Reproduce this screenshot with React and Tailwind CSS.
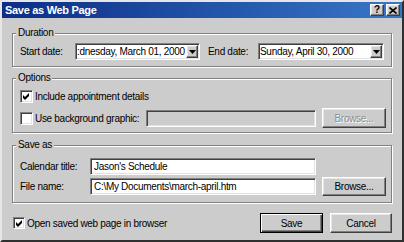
import React from "react";

const sunken =
	"border-t border-l border-r border-b border-t-[#808080] border-l-[#808080] border-r-white border-b-white shadow-[inset_1px_1px_0_#404040,inset_-1px_-1px_0_#e2e2e2]";
const raised =
	"border-t border-l border-r border-b border-t-white border-l-white border-r-[#404040] border-b-[#404040] shadow-[inset_-1px_-1px_0_#808080,inset_1px_1px_0_#e6e6e6]";

function Check() {
	return (
		<svg width="7" height="7" viewBox="0 0 7 7">
			<path d="M0 2 L2 4 L6 0 L6 3 L2 7 L0 5 Z" fill="#000" />
		</svg>
	);
}

function Checkbox({ checked, size = "w-[13px] h-[13px]" }) {
	return (
		<div className={`${sunken} ${size} bg-white flex items-center justify-center shrink-0`}>
			{checked && <Check />}
		</div>
	);
}

function Combo({ value, width }) {
	return (
		<div className={`${sunken} ${width} h-[17px] bg-white flex items-center pl-[1px] pr-[1px]`}>
			<span className="flex-1 whitespace-nowrap overflow-hidden">{value}</span>
			<div className={`${raised} bg-[#cccccc] w-[12px] h-[13px] flex items-center justify-center`}>
				<svg width="7" height="4" viewBox="0 0 7 4">
					<path d="M0 0 H7 L3.5 4 Z" fill="#000" />
				</svg>
			</div>
		</div>
	);
}

function Field({ value, width, disabled }) {
	return (
		<div
			className={`${sunken} ${width} h-[17px] ${disabled ? "bg-[#cccccc]" : "bg-white"} flex items-center pl-[3px] whitespace-nowrap overflow-hidden`}
		>
			{value}
		</div>
	);
}

function Button({ children, width, height = "h-[20px]", disabled, isDefault }) {
	const frame = isDefault
		? "border border-black shadow-[inset_1px_1px_0_#fff,inset_-1px_-1px_0_#404040,inset_-2px_-2px_0_#808080]"
		: raised;
	return (
		<div
			className={`${frame} ${width} ${height} bg-[#cccccc] flex items-center justify-center ${
				disabled ? "text-[#8c8c8c] [text-shadow:1px_1px_0_#fff]" : ""
			}`}
		>
			{children}
		</div>
	);
}

function Group({ label, children, className }) {
	return (
		<fieldset
			className={`min-w-0 border border-[#808080] shadow-[inset_1px_1px_0_#fff,1px_1px_0_#fff] ${className}`}
		>
			<legend className="ml-[3px] px-[2px] bg-[#cccccc] leading-[12px]">{label}</legend>
			{children}
		</fieldset>
	);
}

export default function App() {
	return (
		<div className="w-[404px] h-[242px] bg-[#cccccc] text-black text-[10px] tracking-[-0.3px] font-['Liberation_Sans',Arial,sans-serif] border-2 border-t-[#e6e6e6] border-l-[#e6e6e6] border-r-[#303030] border-b-[#303030] flex flex-col overflow-hidden">
			<div className="h-[16px] bg-gradient-to-r from-[#0c2e86] to-[#3a76c6] flex items-center pl-[3px] pr-[2px]">
				<span className="flex-1 text-white font-bold text-[11px] leading-none">Save as Web Page</span>
				<div className="flex gap-[2px]">
					<div className={`${raised} bg-[#cccccc] w-[14px] h-[12px] flex items-center justify-center font-bold text-[10px] leading-none tracking-normal`}>
						?
					</div>
					<div className={`${raised} bg-[#cccccc] w-[14px] h-[12px] flex items-center justify-center`}>
						<svg width="8" height="7" viewBox="0 0 8 7">
							<path d="M0.5 0.5 L7.5 6.5 M7.5 0.5 L0.5 6.5" stroke="#000" strokeWidth="1.6" />
						</svg>
					</div>
				</div>
			</div>

			<div className="px-[10px] flex flex-col">
				<Group label="Duration" className="mt-[9px]">
					<div className="pl-[7px] pt-[4px] pb-[6px] flex items-center">
						<span className="w-[55px]">Start date:</span>
						<Combo value=":dnesday, March 01, 2000" width="w-[125px]" />
						<span className="ml-[8px] w-[50px]">End date:</span>
						<Combo value="Sunday, April 30, 2000" width="w-[126px]" />
					</div>
				</Group>

				<Group label="Options" className="mt-[5px]">
					<div className="pl-[7px] pr-[5px] pt-[6px] pb-[4px] flex flex-col">
						<div className="flex items-center gap-[2px] h-[13px]">
							<Checkbox checked />
							<span>Include appointment details</span>
						</div>
						<div className="mt-[5px] h-[20px] flex items-center">
							<div className="w-[126px] flex items-center gap-[2px]">
								<Checkbox />
								<span>Use background graphic:</span>
							</div>
							<Field width="w-[170px]" disabled />
							<div className="ml-[6px]">
								<Button width="w-[64px]" disabled>
									Browse...
								</Button>
							</div>
						</div>
					</div>
				</Group>

				<Group label="Save as" className="mt-[6px]">
					<div className="pl-[7px] pr-[5px] pt-[7px] pb-[6px] flex flex-col">
						<div className="flex items-center h-[16px]">
							<span className="w-[70px]">Calendar title:</span>
							<Field value="Jason's Schedule" width="w-[226px]" />
						</div>
						<div className="mt-[3px] h-[19px] flex items-center">
							<span className="w-[70px]">File name:</span>
							<Field value={"C:\\My Documents\\march-april.htm"} width="w-[226px]" />
							<div className="ml-[6px]">
								<Button width="w-[64px]" height="h-[19px]">
									Browse...
								</Button>
							</div>
						</div>
					</div>
				</Group>

				<div className="mt-[10px] h-[20px] flex items-center">
					<div className="ml-[1px] flex items-center gap-[2px] flex-1">
						<Checkbox checked size="w-[12px] h-[12px]" />
						<span>Open saved web page in browser</span>
					</div>
					<Button width="w-[63px]" isDefault>
						Save
					</Button>
					<div className="ml-[7px]">
						<Button width="w-[62px]">Cancel</Button>
					</div>
				</div>
			</div>
		</div>
	);
}
